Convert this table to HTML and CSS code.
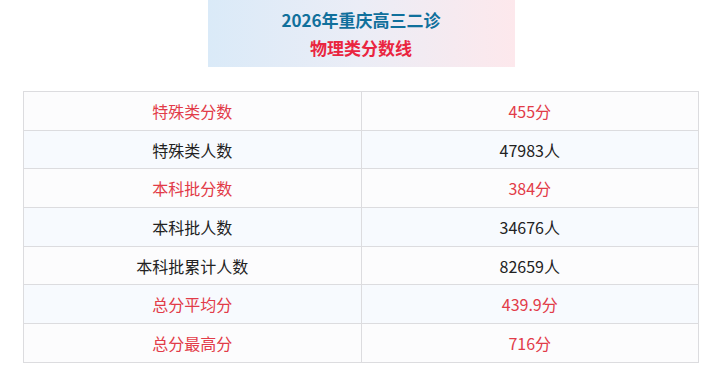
FILE: index.html
```html
<!DOCTYPE html>
<html lang="zh-CN">
<head>
    <meta charset="UTF-8">
    <meta name="viewport" content="width=device-width, initial-scale=1.0">
    <title>2026年重庆高三二诊 物理类分数线</title>
    <link rel="stylesheet" href="styles.css">
</head>
<body>
    <div class="wrap">
        <div class="banner">
            <div class="banner-title">2026年重庆高三二诊</div>
            <div class="banner-sub">物理类分数线</div>
        </div>
        <table class="score-table">
            <tr class="hl"><td>特殊类分数</td><td>455分</td></tr>
            <tr><td>特殊类人数</td><td>47983人</td></tr>
            <tr class="hl"><td>本科批分数</td><td>384分</td></tr>
            <tr><td>本科批人数</td><td>34676人</td></tr>
            <tr><td>本科批累计人数</td><td>82659人</td></tr>
            <tr class="hl"><td>总分平均分</td><td>439.9分</td></tr>
            <tr class="hl"><td>总分最高分</td><td>716分</td></tr>
        </table>
    </div>
</body>
</html>
```

FILE: styles.css
```css
body {
    margin: 0;
    font-family: "Noto Sans CJK SC", "Noto Sans", sans-serif;
    background: #fff;
    color: #222;
}

.wrap {
    width: 676px;
    padding-left: 23px;
    display: flex;
    flex-direction: column;
    align-items: center;
}

.banner {
    width: 307px;
    height: 67px;
    margin-bottom: 24px;
    background: linear-gradient(90deg, #daeaf8 0%, #ebedf6 50%, #fde8ec 100%);
    display: flex;
    flex-direction: column;
    align-items: center;
    justify-content: center;
    font-weight: bold;
    font-size: 17px;
    line-height: 28px;
}

.banner-title {
    color: #10709c;
}

.banner-sub {
    color: #ea2540;
}

.score-table {
    width: 676px;
    border-collapse: collapse;
    font-size: 16px;
}

.score-table td {
    width: 50%;
    height: 37.7px;
    padding: 0;
    border: 1px solid #dcdcdf;
    text-align: center;
    vertical-align: middle;
}

.score-table tr:nth-child(odd) {
    background: #fcfcfd;
}

.score-table tr:nth-child(even) {
    background: #f7fafe;
}

.score-table tr.hl td {
    color: #e23b48;
}
```
